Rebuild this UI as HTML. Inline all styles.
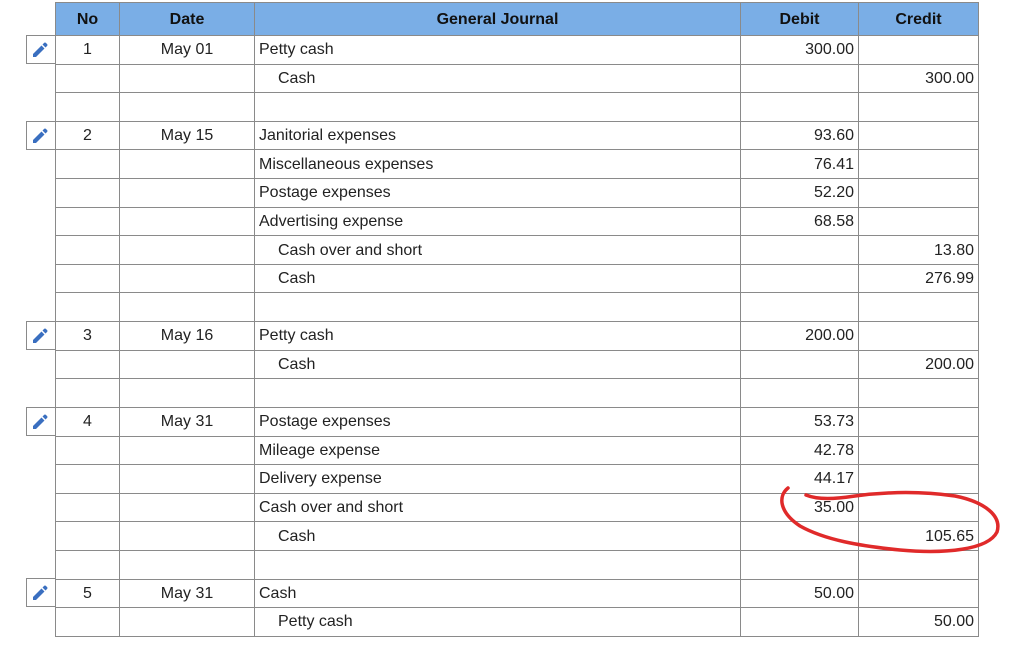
<!DOCTYPE html>
<html><head><style>
body{margin:0;background:#fff;font-family:"Liberation Sans",Arial,sans-serif;font-size:16px;color:#222;width:1016px;height:652px;overflow:hidden;position:relative}
table{position:absolute;left:55px;top:2px;border-collapse:collapse;table-layout:fixed}
td,th{border:1px solid #8a8a8a;padding:1px 4px 0 4px;white-space:nowrap;overflow:hidden;box-sizing:border-box}
th{background:#7aaee6;height:33px;font-weight:bold;color:#111}
td{height:28.62px}
.c{text-align:center}.r{text-align:right}.i{padding-left:23px}
.ed{position:absolute;left:26px;width:29px;height:29px;border:1px solid #8a8a8a;border-right:none;box-sizing:border-box;background:#fff}
</style></head><body>
<table>
<colgroup><col style="width:64px"><col style="width:135px"><col style="width:486px"><col style="width:118px"><col style="width:120px"></colgroup>
<tr><th>No</th><th>Date</th><th>General Journal</th><th>Debit</th><th>Credit</th></tr>
<tr><td class="c">1</td><td class="c">May 01</td><td>Petty cash</td><td class="r">300.00</td><td></td></tr>
<tr><td></td><td></td><td class="i">Cash</td><td></td><td class="r">300.00</td></tr>
<tr><td></td><td></td><td></td><td></td><td></td></tr>
<tr><td class="c">2</td><td class="c">May 15</td><td>Janitorial expenses</td><td class="r">93.60</td><td></td></tr>
<tr><td></td><td></td><td>Miscellaneous expenses</td><td class="r">76.41</td><td></td></tr>
<tr><td></td><td></td><td>Postage expenses</td><td class="r">52.20</td><td></td></tr>
<tr><td></td><td></td><td>Advertising expense</td><td class="r">68.58</td><td></td></tr>
<tr><td></td><td></td><td class="i">Cash over and short</td><td></td><td class="r">13.80</td></tr>
<tr><td></td><td></td><td class="i">Cash</td><td></td><td class="r">276.99</td></tr>
<tr><td></td><td></td><td></td><td></td><td></td></tr>
<tr><td class="c">3</td><td class="c">May 16</td><td>Petty cash</td><td class="r">200.00</td><td></td></tr>
<tr><td></td><td></td><td class="i">Cash</td><td></td><td class="r">200.00</td></tr>
<tr><td></td><td></td><td></td><td></td><td></td></tr>
<tr><td class="c">4</td><td class="c">May 31</td><td>Postage expenses</td><td class="r">53.73</td><td></td></tr>
<tr><td></td><td></td><td>Mileage expense</td><td class="r">42.78</td><td></td></tr>
<tr><td></td><td></td><td>Delivery expense</td><td class="r">44.17</td><td></td></tr>
<tr><td></td><td></td><td>Cash over and short</td><td class="r">35.00</td><td></td></tr>
<tr><td></td><td></td><td class="i">Cash</td><td></td><td class="r">105.65</td></tr>
<tr><td></td><td></td><td></td><td></td><td></td></tr>
<tr><td class="c">5</td><td class="c">May 31</td><td>Cash</td><td class="r">50.00</td><td></td></tr>
<tr><td></td><td></td><td class="i">Petty cash</td><td></td><td class="r">50.00</td></tr>
</table>
<div class="ed" style="top:35px"></div>
<div class="ed" style="top:121px"></div>
<div class="ed" style="top:321px"></div>
<div class="ed" style="top:407px"></div>
<div class="ed" style="top:578px"></div>
<svg width="1016" height="652" style="position:absolute;left:0;top:0">
<defs><g id="p"><path d="M6 16 L6 19 L9 19 L17.5 10.5 L14.5 7.5 Z M15.5 6.5 L17 5 Q18 4 19 5 L20 6 Q21 7 20 8 L18.5 9.5 Z" fill="#3a6fc0"/></g></defs>
<use href="#p" x="27" y="38"/><use href="#p" x="27" y="124"/><use href="#p" x="27" y="324"/><use href="#p" x="27" y="410"/><use href="#p" x="27" y="581"/>
<path d="M788 488 C778 496 779 512 800 526 C825 540 860 546 900 550 C945 554 988 550 997 532 C1002 516 985 502 955 496 C920 491 885 492 855 496 C835 499 818 500 806 495" fill="none" stroke="#e02a2a" stroke-width="3.5" stroke-linecap="round"/>
</svg>
</body></html>
